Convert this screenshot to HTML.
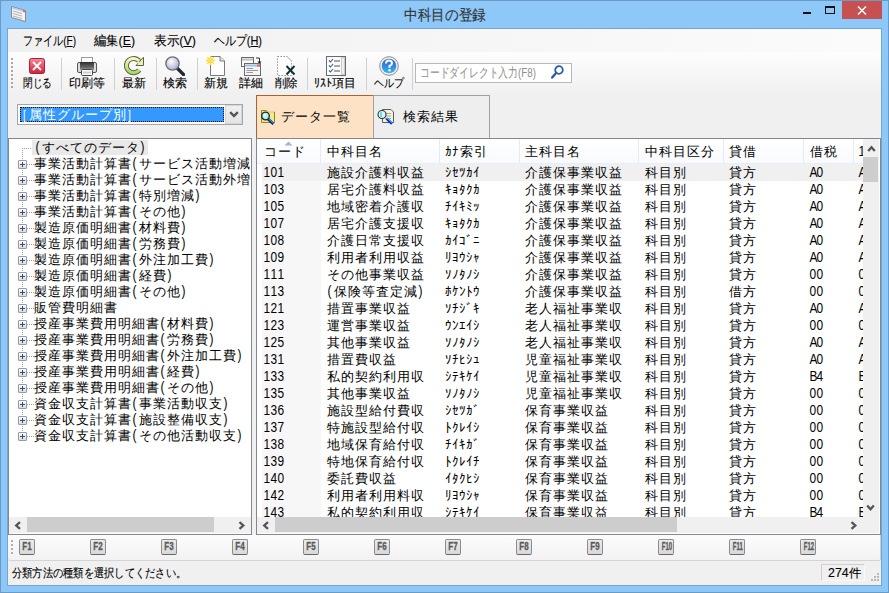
<!DOCTYPE html>
<html><head><meta charset="utf-8"><style>
*{box-sizing:border-box;margin:0;padding:0}
html,body{width:889px;height:593px;overflow:hidden}
body{font-family:"Liberation Sans",sans-serif;font-size:14px;color:#000;position:relative;background:#8ec8f8}
.a{position:absolute}
.nw{white-space:nowrap}
.ft{transform-origin:0 0}
i.h{display:inline-block;width:7px;text-align:center;font-style:normal;transform:scaleX(.85)}
i.k{display:inline-block;width:7px;text-align:center;font-style:normal;font-size:13px}
.cb i.h{font-size:12px}
i.z{display:inline-block;width:14px;text-align:center;font-style:normal;font-size:13px}
.sep{position:absolute;top:58px;width:1px;height:32px;background:#d0d0d0}
.tr{position:absolute;left:34px;height:16px;line-height:16px;white-space:nowrap}
.pb{position:absolute;left:18px;width:9px;height:9px;border:1px solid #9a9a9a;border-radius:1px;background:linear-gradient(#fcfcfc,#dcdcdc)}
.pb:before{content:"";position:absolute;left:1px;top:3px;width:5px;height:1px;background:#2a4a9c}
.pb:after{content:"";position:absolute;left:3px;top:1px;width:1px;height:5px;background:#2a4a9c}
.row{position:absolute;left:257px;width:606px;height:17px;line-height:17px;white-space:nowrap;overflow:hidden}
.row span{position:absolute;top:0}
.fk{position:absolute;top:539px;width:16px;height:16px;border:1px solid #8c8c8c;border-bottom-color:#666;border-radius:2px;background:linear-gradient(#ececec,#d8d8d8);overflow:hidden}
.fk b{position:absolute;left:0;top:0;width:14px;font-size:10px;font-weight:bold;color:#5a5a5a;-webkit-text-stroke:0.3px #5a5a5a;text-align:center;line-height:14px;transform:scaleX(.8);transform-origin:50% 0}
.fk b.w{transform:scaleX(.6)}
.ft{-webkit-text-stroke:0.12px #000}
</style></head><body>
<div class="a" style="left:0;top:0;width:889px;height:593px;border:1px solid #6b9ac4;background:#8ec8f8"></div>
<svg class="a" style="left:10px;top:5px" width="17" height="18" viewBox="0 0 17 18">
<path d="M1.5 1.5 L15.5 5.5 L15.5 16.5 L1.5 12.5 Z" fill="#f4f4f4" stroke="#8a8a8a" stroke-width="1"/>
<path d="M2 2 L15 5.8 L15 7.5 L2 3.8 Z" fill="#b8d0ea"/>
<path d="M13 5 L15 5.6 L15 7.3 L13 6.7 Z" fill="#e06060"/>
<path d="M3 6 L12 8.6 M3 8.5 L12 11.1 M3 11 L12 13.6" stroke="#a0a0a0" stroke-width="0.8"/>
</svg>
<div id="f1" class="a nw ft" style="left:404px;top:5px;font-size:15px;line-height:20px;transform:scaleX(0.9111);color:#3a3a3a;">中科目の登録</div>
<div class="a" style="left:803px;top:12px;width:8px;height:2px;background:#111"></div>
<div class="a" style="left:825px;top:6px;width:10px;height:8px;border:1px solid #111;border-top-width:2px"></div>
<div class="a" style="left:842px;top:1px;width:40px;height:18px;background:#c75050"></div>
<svg class="a" style="left:857px;top:6px" width="10" height="9" viewBox="0 0 10 9"><path d="M1 0.5 L9 8.5 M9 0.5 L1 8.5" stroke="#fff" stroke-width="1.5"/></svg>
<div class="a" style="left:7px;top:28px;width:875px;height:558px;border:1px solid #74a4d0;background:#f0f0f0"></div>
<div class="a" style="left:8px;top:29px;width:873px;height:23px;background:linear-gradient(90deg,#f0f0f0,#fbfbfb)"></div>
<div class="a" style="left:8px;top:52px;width:873px;height:43px;background:linear-gradient(#fdfdfd,#f0f0f0)"></div>
<div id="f2" class="a nw ft" style="left:23px;top:33px;font-size:13px;line-height:16px;transform:scaleX(0.7721);">ファイル(<u>F</u>)</div>
<div id="f3" class="a nw ft" style="left:94px;top:33px;font-size:13px;line-height:16px;transform:scaleX(0.9456);">編集(<u>E</u>)</div>
<div id="f4" class="a nw ft" style="left:154px;top:33px;font-size:13px;line-height:16px;transform:scaleX(0.9686);">表示(<u>V</u>)</div>
<div id="f5" class="a nw ft" style="left:214px;top:33px;font-size:13px;line-height:16px;transform:scaleX(0.8410);">ヘルプ(<u>H</u>)</div>
<div class="a" style="left:11px;top:58px;width:2px;height:30px;background:repeating-linear-gradient(#a8a8a8 0 2px,transparent 2px 4px)"></div>
<div id="f6" class="a nw ft" style="left:23px;top:76px;font-size:12px;line-height:14px;transform:scaleX(0.8056);">閉じる</div>
<div id="f7" class="a nw ft" style="left:69px;top:76px;font-size:12px;line-height:14px;transform:scaleX(1.0000);">印刷等</div>
<div id="f8" class="a nw ft" style="left:122px;top:76px;font-size:12px;line-height:14px;transform:scaleX(1.0000);">最新</div>
<div id="f9" class="a nw ft" style="left:163px;top:76px;font-size:12px;line-height:14px;transform:scaleX(1.0000);">検索</div>
<div id="f10" class="a nw ft" style="left:204px;top:76px;font-size:12px;line-height:14px;transform:scaleX(1.0000);">新規</div>
<div id="f11" class="a nw ft" style="left:239px;top:76px;font-size:12px;line-height:14px;transform:scaleX(1.0000);">詳細</div>
<div id="f12" class="a nw ft" style="left:275px;top:76px;font-size:12px;line-height:14px;transform:scaleX(0.9583);">削除</div>
<div id="f13" class="a nw ft" style="left:314px;top:76px;font-size:12px;line-height:14px;transform:scaleX(1.0000);">ﾘｽﾄ項目</div>
<div id="f14" class="a nw ft" style="left:374px;top:76px;font-size:12px;line-height:14px;transform:scaleX(0.8333);">ヘルプ</div>
<div class="sep" style="left:61px"></div>
<div class="sep" style="left:114px"></div>
<div class="sep" style="left:156px"></div>
<div class="sep" style="left:197px"></div>
<div class="sep" style="left:307px"></div>
<div class="sep" style="left:366px"></div>
<div class="sep" style="left:412px"></div>
<svg class="a" style="left:29px;top:58px" width="16" height="16" viewBox="0 0 16 16">
<defs><linearGradient id="rg" x1="0" y1="0" x2="0" y2="1"><stop offset="0" stop-color="#f68a98"/><stop offset="1" stop-color="#d21f3a"/></linearGradient></defs>
<rect x="0.5" y="0.5" width="15" height="15" rx="2" fill="url(#rg)" stroke="#a8203a"/>
<path d="M4 4 L12 12 M12 4 L4 12" stroke="#fff" stroke-width="1.8"/></svg>
<svg class="a" style="left:77px;top:56px" width="20" height="20" viewBox="0 0 20 20">
<defs><linearGradient id="pg" x1="0" y1="0" x2="0" y2="1"><stop offset="0" stop-color="#2e2e2e"/><stop offset="0.7" stop-color="#6a6a6a"/><stop offset="1" stop-color="#a8a8a8"/></linearGradient></defs>
<rect x="4.5" y="1.5" width="11" height="5" fill="#fcfcfc" stroke="#9a9a9a"/>
<rect x="0.5" y="6.5" width="19" height="10" rx="1.5" fill="#dcdcdc" stroke="#555"/>
<rect x="3" y="6" width="14" height="8" fill="url(#pg)"/>
<rect x="4.5" y="13.5" width="11" height="6" rx="1" fill="#fafafa" stroke="#444"/>
<rect x="6" y="15.5" width="8" height="2" fill="#cfcfcf"/></svg>
<svg class="a" style="left:124px;top:55px" width="21" height="21" viewBox="0 0 21 21">
<defs><linearGradient id="gg" x1="0" y1="0" x2="0" y2="1"><stop offset="0" stop-color="#f8f8c0"/><stop offset="1" stop-color="#a8d868"/></linearGradient></defs>
<path d="M15.27 15.03 A7.2 7.2 0 1 1 15.12 5.97" fill="none" stroke="#5c6448" stroke-width="5"/>
<path d="M15.27 15.03 A7.2 7.2 0 1 1 15.12 5.97" fill="none" stroke="url(#gg)" stroke-width="3"/>
<path d="M12 10.5 L19.5 2.2 L19.5 10.5 Z" fill="#f0f0b0" stroke="#5c6448" stroke-width="1" stroke-linejoin="miter"/>
<path d="M13.8 8.2 L15 7" stroke="#e8eca8" stroke-width="2.2"/></svg>
<svg class="a" style="left:165px;top:56px" width="20" height="20" viewBox="0 0 20 20">
<defs><radialGradient id="mg" cx="0.4" cy="0.35" r="0.7"><stop offset="0" stop-color="#ffffff"/><stop offset="1" stop-color="#a8a8d8"/></radialGradient></defs>
<path d="M11.5 11.5 L18.5 18.5" stroke="#202838" stroke-width="3.2" stroke-linecap="round"/>
<circle cx="7.5" cy="7.5" r="6.6" fill="url(#mg)" stroke="#707070" stroke-width="1.4"/></svg>
<svg class="a" style="left:205px;top:56px" width="21" height="20" viewBox="0 0 21 20">
<path d="M5.5 0.5 H15 L19.5 5 V19.5 H5.5 Z" fill="#fff" stroke="#7a7a7a"/>
<path d="M15 0.5 V5 H19.5" fill="#e8e8e8" stroke="#7a7a7a"/>
<path d="M5.5 0 V9 M1 4.5 H10 M2.3 1.3 L8.7 7.7 M8.7 1.3 L2.3 7.7" stroke="#ffd830" stroke-width="1.3"/>
<circle cx="5.5" cy="4.5" r="2.2" fill="#ffe050"/></svg>
<svg class="a" style="left:240px;top:56px" width="22" height="20" viewBox="0 0 22 20">
<rect x="1.5" y="1.5" width="12" height="9" fill="#fafafa" stroke="#6a6a6a"/>
<path d="M2 3.5 H13" stroke="#c0c0c0" stroke-width="2"/>
<path d="M16 2 H19.5 V6.5" fill="none" stroke="#333"/><path d="M17.5 5.5 L21.5 5.5 L19.5 8 Z" fill="#222"/>
<rect x="4.5" y="7.5" width="16" height="12" fill="#f4f4f4" stroke="#6a6a6a"/>
<path d="M5 9.5 H20" stroke="#9cc0e8" stroke-width="2"/><rect x="17" y="8.5" width="3" height="2" fill="#e06060"/>
<path d="M6.5 12.5 H13 M6.5 14.5 H18 M6.5 16.5 H13" stroke="#9a9a9a" stroke-width="1"/></svg>
<svg class="a" style="left:276px;top:56px" width="21" height="20" viewBox="0 0 21 20">
<path d="M1.5 0.5 H11 L15.5 5 V19.5 H1.5 Z" fill="#fff" stroke="#909090" stroke-dasharray="1.5 1.5"/>
<path d="M11 0.5 L15.5 5" fill="none" stroke="#909090" stroke-dasharray="1.5 1.5"/>
<path d="M10.5 10 L18.5 18.5 M18.5 10 L10.5 18.5" stroke="#10302e" stroke-width="1.9"/></svg>
<svg class="a" style="left:326px;top:56px" width="20" height="20" viewBox="0 0 20 20">
<rect x="0.5" y="0.5" width="19" height="19" fill="#fbfbfb" stroke="#6a6a6a"/>
<rect x="15.5" y="1.5" width="3" height="17" fill="#eee" stroke="#ccc"/>
<path d="M3 4.5 L4.5 6 L7 3 M3 9.5 L4.5 11 L7 8 M3 14.5 L4.5 16 L7 13" fill="none" stroke="#406080" stroke-width="1.1"/>
<path d="M8 5 H14 M8 10 H14 M8 15 H14" stroke="#555" stroke-width="1"/></svg>
<svg class="a" style="left:379px;top:56px" width="20" height="20" viewBox="0 0 20 20">
<defs><linearGradient id="hg" x1="0" y1="0" x2="0" y2="1"><stop offset="0" stop-color="#2a5cd0"/><stop offset="1" stop-color="#3ab8f0"/></linearGradient></defs>
<circle cx="10" cy="10" r="9.3" fill="#f4f4f4" stroke="#8a8a8a" stroke-width="1"/>
<circle cx="10" cy="10" r="7.3" fill="url(#hg)"/>
<path d="M7 7.5 Q7 4.5 10 4.5 Q13 4.5 13 7.2 Q13 9 10.5 10 V11.8" fill="none" stroke="#fff" stroke-width="2"/>
<circle cx="10.5" cy="14.3" r="1.2" fill="#fff"/></svg>
<div class="a" style="left:415px;top:63px;width:157px;height:20px;border:1px solid #b6b8bd;background:#fff"></div>
<div id="f15" class="a nw ft" style="left:420px;top:65px;font-size:13px;line-height:16px;transform:scaleX(0.7540);color:#8d8d8d;-webkit-text-stroke:0;">コードダイレクト入力(F8)</div>
<svg class="a" style="left:551px;top:65px" width="13" height="14" viewBox="0 0 13 14">
<circle cx="8" cy="5" r="3.8" fill="none" stroke="#2a5ca8" stroke-width="1.8"/>
<path d="M5.3 7.8 L1.2 12.5" stroke="#2a5ca8" stroke-width="2.4" stroke-linecap="round"/></svg>
<div class="a" style="left:17px;top:104px;width:226px;height:21px;border:1px solid #a6a6a6;background:#fff"></div>
<div class="a" style="left:20px;top:107px;width:204px;height:15px;background:#3399ff;outline:1px dotted #111;outline-offset:-1px"></div>
<div class="a nw cb" style="left:21px;top:106px;color:#fff;line-height:16px;font-size:14px"><i class="h">[</i><i class="z">属</i><i class="z">性</i><i class="z">グ</i><i class="z">ル</i><i class="z">ー</i><i class="z">プ</i><i class="z">別</i><i class="h">]</i></div>
<div class="a" style="left:225px;top:105px;width:17px;height:19px;background:linear-gradient(#f0f0f0,#e4e4e4);border:1px solid #d6d6d6"></div>
<svg class="a" style="left:229px;top:111px" width="10" height="8" viewBox="0 0 10 8"><path d="M1.2 1.2 L5 5 L8.8 1.2" fill="none" stroke="#555" stroke-width="2.4"/></svg>
<div class="a" style="left:8px;top:138px;width:244px;height:397px;border:1px solid #828790;background:#fff"></div>
<div class="a" style="left:22px;top:148px;width:1px;height:289px;background:repeating-linear-gradient(#a0a0a0 0 1px,transparent 1px 2px)"></div>
<div class="a" style="left:22px;top:148px;width:10px;height:1px;background:repeating-linear-gradient(90deg,#a0a0a0 0 1px,transparent 1px 2px)"></div>
<div class="a" style="left:32px;top:140px;width:116px;height:15px;background:#e9e9e9"></div>
<div class="a" style="left:9px;top:139px;width:242px;height:378px;overflow:hidden">
<div class="tr" style="left:25px;top:0px"><i class="h">(</i><i class="z">す</i><i class="z">べ</i><i class="z">て</i><i class="z">の</i><i class="z">デ</i><i class="z">ー</i><i class="z">タ</i><i class="h">)</i></div>
<div class="a" style="left:18px;top:25px;width:14px;height:1px;background:repeating-linear-gradient(90deg,#a0a0a0 0 1px,transparent 1px 2px)"></div>
<div class="pb" style="left:9px;top:21px"></div>
<div class="tr" style="left:24px;top:16px"><i class="z">事</i><i class="z">業</i><i class="z">活</i><i class="z">動</i><i class="z">計</i><i class="z">算</i><i class="z">書</i><i class="h">(</i><i class="z">サ</i><i class="z">ー</i><i class="z">ビ</i><i class="z">ス</i><i class="z">活</i><i class="z">動</i><i class="z">増</i><i class="z">減</i></div>
<div class="a" style="left:18px;top:41px;width:14px;height:1px;background:repeating-linear-gradient(90deg,#a0a0a0 0 1px,transparent 1px 2px)"></div>
<div class="pb" style="left:9px;top:37px"></div>
<div class="tr" style="left:24px;top:32px"><i class="z">事</i><i class="z">業</i><i class="z">活</i><i class="z">動</i><i class="z">計</i><i class="z">算</i><i class="z">書</i><i class="h">(</i><i class="z">サ</i><i class="z">ー</i><i class="z">ビ</i><i class="z">ス</i><i class="z">活</i><i class="z">動</i><i class="z">外</i><i class="z">増</i></div>
<div class="a" style="left:18px;top:57px;width:14px;height:1px;background:repeating-linear-gradient(90deg,#a0a0a0 0 1px,transparent 1px 2px)"></div>
<div class="pb" style="left:9px;top:53px"></div>
<div class="tr" style="left:24px;top:48px"><i class="z">事</i><i class="z">業</i><i class="z">活</i><i class="z">動</i><i class="z">計</i><i class="z">算</i><i class="z">書</i><i class="h">(</i><i class="z">特</i><i class="z">別</i><i class="z">増</i><i class="z">減</i><i class="h">)</i></div>
<div class="a" style="left:18px;top:73px;width:14px;height:1px;background:repeating-linear-gradient(90deg,#a0a0a0 0 1px,transparent 1px 2px)"></div>
<div class="pb" style="left:9px;top:69px"></div>
<div class="tr" style="left:24px;top:64px"><i class="z">事</i><i class="z">業</i><i class="z">活</i><i class="z">動</i><i class="z">計</i><i class="z">算</i><i class="z">書</i><i class="h">(</i><i class="z">そ</i><i class="z">の</i><i class="z">他</i><i class="h">)</i></div>
<div class="a" style="left:18px;top:89px;width:14px;height:1px;background:repeating-linear-gradient(90deg,#a0a0a0 0 1px,transparent 1px 2px)"></div>
<div class="pb" style="left:9px;top:85px"></div>
<div class="tr" style="left:24px;top:80px"><i class="z">製</i><i class="z">造</i><i class="z">原</i><i class="z">価</i><i class="z">明</i><i class="z">細</i><i class="z">書</i><i class="h">(</i><i class="z">材</i><i class="z">料</i><i class="z">費</i><i class="h">)</i></div>
<div class="a" style="left:18px;top:105px;width:14px;height:1px;background:repeating-linear-gradient(90deg,#a0a0a0 0 1px,transparent 1px 2px)"></div>
<div class="pb" style="left:9px;top:101px"></div>
<div class="tr" style="left:24px;top:96px"><i class="z">製</i><i class="z">造</i><i class="z">原</i><i class="z">価</i><i class="z">明</i><i class="z">細</i><i class="z">書</i><i class="h">(</i><i class="z">労</i><i class="z">務</i><i class="z">費</i><i class="h">)</i></div>
<div class="a" style="left:18px;top:121px;width:14px;height:1px;background:repeating-linear-gradient(90deg,#a0a0a0 0 1px,transparent 1px 2px)"></div>
<div class="pb" style="left:9px;top:117px"></div>
<div class="tr" style="left:24px;top:112px"><i class="z">製</i><i class="z">造</i><i class="z">原</i><i class="z">価</i><i class="z">明</i><i class="z">細</i><i class="z">書</i><i class="h">(</i><i class="z">外</i><i class="z">注</i><i class="z">加</i><i class="z">工</i><i class="z">費</i><i class="h">)</i></div>
<div class="a" style="left:18px;top:137px;width:14px;height:1px;background:repeating-linear-gradient(90deg,#a0a0a0 0 1px,transparent 1px 2px)"></div>
<div class="pb" style="left:9px;top:133px"></div>
<div class="tr" style="left:24px;top:128px"><i class="z">製</i><i class="z">造</i><i class="z">原</i><i class="z">価</i><i class="z">明</i><i class="z">細</i><i class="z">書</i><i class="h">(</i><i class="z">経</i><i class="z">費</i><i class="h">)</i></div>
<div class="a" style="left:18px;top:153px;width:14px;height:1px;background:repeating-linear-gradient(90deg,#a0a0a0 0 1px,transparent 1px 2px)"></div>
<div class="pb" style="left:9px;top:149px"></div>
<div class="tr" style="left:24px;top:144px"><i class="z">製</i><i class="z">造</i><i class="z">原</i><i class="z">価</i><i class="z">明</i><i class="z">細</i><i class="z">書</i><i class="h">(</i><i class="z">そ</i><i class="z">の</i><i class="z">他</i><i class="h">)</i></div>
<div class="a" style="left:18px;top:169px;width:14px;height:1px;background:repeating-linear-gradient(90deg,#a0a0a0 0 1px,transparent 1px 2px)"></div>
<div class="pb" style="left:9px;top:165px"></div>
<div class="tr" style="left:24px;top:160px"><i class="z">販</i><i class="z">管</i><i class="z">費</i><i class="z">明</i><i class="z">細</i><i class="z">書</i></div>
<div class="a" style="left:18px;top:185px;width:14px;height:1px;background:repeating-linear-gradient(90deg,#a0a0a0 0 1px,transparent 1px 2px)"></div>
<div class="pb" style="left:9px;top:181px"></div>
<div class="tr" style="left:24px;top:176px"><i class="z">授</i><i class="z">産</i><i class="z">事</i><i class="z">業</i><i class="z">費</i><i class="z">用</i><i class="z">明</i><i class="z">細</i><i class="z">書</i><i class="h">(</i><i class="z">材</i><i class="z">料</i><i class="z">費</i><i class="h">)</i></div>
<div class="a" style="left:18px;top:201px;width:14px;height:1px;background:repeating-linear-gradient(90deg,#a0a0a0 0 1px,transparent 1px 2px)"></div>
<div class="pb" style="left:9px;top:197px"></div>
<div class="tr" style="left:24px;top:192px"><i class="z">授</i><i class="z">産</i><i class="z">事</i><i class="z">業</i><i class="z">費</i><i class="z">用</i><i class="z">明</i><i class="z">細</i><i class="z">書</i><i class="h">(</i><i class="z">労</i><i class="z">務</i><i class="z">費</i><i class="h">)</i></div>
<div class="a" style="left:18px;top:217px;width:14px;height:1px;background:repeating-linear-gradient(90deg,#a0a0a0 0 1px,transparent 1px 2px)"></div>
<div class="pb" style="left:9px;top:213px"></div>
<div class="tr" style="left:24px;top:208px"><i class="z">授</i><i class="z">産</i><i class="z">事</i><i class="z">業</i><i class="z">費</i><i class="z">用</i><i class="z">明</i><i class="z">細</i><i class="z">書</i><i class="h">(</i><i class="z">外</i><i class="z">注</i><i class="z">加</i><i class="z">工</i><i class="z">費</i><i class="h">)</i></div>
<div class="a" style="left:18px;top:233px;width:14px;height:1px;background:repeating-linear-gradient(90deg,#a0a0a0 0 1px,transparent 1px 2px)"></div>
<div class="pb" style="left:9px;top:229px"></div>
<div class="tr" style="left:24px;top:224px"><i class="z">授</i><i class="z">産</i><i class="z">事</i><i class="z">業</i><i class="z">費</i><i class="z">用</i><i class="z">明</i><i class="z">細</i><i class="z">書</i><i class="h">(</i><i class="z">経</i><i class="z">費</i><i class="h">)</i></div>
<div class="a" style="left:18px;top:249px;width:14px;height:1px;background:repeating-linear-gradient(90deg,#a0a0a0 0 1px,transparent 1px 2px)"></div>
<div class="pb" style="left:9px;top:245px"></div>
<div class="tr" style="left:24px;top:240px"><i class="z">授</i><i class="z">産</i><i class="z">事</i><i class="z">業</i><i class="z">費</i><i class="z">用</i><i class="z">明</i><i class="z">細</i><i class="z">書</i><i class="h">(</i><i class="z">そ</i><i class="z">の</i><i class="z">他</i><i class="h">)</i></div>
<div class="a" style="left:18px;top:265px;width:14px;height:1px;background:repeating-linear-gradient(90deg,#a0a0a0 0 1px,transparent 1px 2px)"></div>
<div class="pb" style="left:9px;top:261px"></div>
<div class="tr" style="left:24px;top:256px"><i class="z">資</i><i class="z">金</i><i class="z">収</i><i class="z">支</i><i class="z">計</i><i class="z">算</i><i class="z">書</i><i class="h">(</i><i class="z">事</i><i class="z">業</i><i class="z">活</i><i class="z">動</i><i class="z">収</i><i class="z">支</i><i class="h">)</i></div>
<div class="a" style="left:18px;top:281px;width:14px;height:1px;background:repeating-linear-gradient(90deg,#a0a0a0 0 1px,transparent 1px 2px)"></div>
<div class="pb" style="left:9px;top:277px"></div>
<div class="tr" style="left:24px;top:272px"><i class="z">資</i><i class="z">金</i><i class="z">収</i><i class="z">支</i><i class="z">計</i><i class="z">算</i><i class="z">書</i><i class="h">(</i><i class="z">施</i><i class="z">設</i><i class="z">整</i><i class="z">備</i><i class="z">収</i><i class="z">支</i><i class="h">)</i></div>
<div class="a" style="left:18px;top:297px;width:14px;height:1px;background:repeating-linear-gradient(90deg,#a0a0a0 0 1px,transparent 1px 2px)"></div>
<div class="pb" style="left:9px;top:293px"></div>
<div class="tr" style="left:24px;top:288px"><i class="z">資</i><i class="z">金</i><i class="z">収</i><i class="z">支</i><i class="z">計</i><i class="z">算</i><i class="z">書</i><i class="h">(</i><i class="z">そ</i><i class="z">の</i><i class="z">他</i><i class="z">活</i><i class="z">動</i><i class="z">収</i><i class="z">支</i><i class="h">)</i></div>
</div>
<div class="a" style="left:9px;top:517px;width:242px;height:16px;background:#f0f0f0"></div>
<div class="a" style="left:27px;top:517px;width:187px;height:15px;background:#cdcdcd"></div>
<svg class="a" style="left:14px;top:521px" width="8" height="9" viewBox="0 0 8 9"><path d="M6 1.2 L2.2 4.5 L6 7.8" fill="none" stroke="#555" stroke-width="2.3"/></svg>
<svg class="a" style="left:238px;top:521px" width="8" height="9" viewBox="0 0 8 9"><path d="M1.5 1.2 L5.3 4.5 L1.5 7.8" fill="none" stroke="#555" stroke-width="2.3"/></svg>
<div class="a" style="left:256px;top:95px;width:117px;height:43px;background:#fde2c6;border:1px solid #a8642a;border-bottom:none;border-right:none"></div>
<div class="a" style="left:373px;top:95px;width:117px;height:43px;background:#eeeeee;border:1px solid #a0a0a0;border-bottom:none"></div>
<div class="a nw" style="left:280px;top:108px;line-height:16px"><i class="z">デ</i><i class="z">ー</i><i class="z">タ</i><i class="z">一</i><i class="z">覧</i></div>
<div class="a nw" style="left:402px;top:108px;line-height:16px"><i class="z">検</i><i class="z">索</i><i class="z">結</i><i class="z">果</i></div>
<svg class="a" style="left:260px;top:109px" width="17" height="17" viewBox="0 0 17 17">
<path d="M1.5 1.5 H6.5 L8 3 H14.5 V13.5 H1.5 Z" fill="#f8e888" stroke="#8a8a20"/>
<path d="M2 3 H14" stroke="#fff8c0"/>
<path d="M7.5 9.5 L13.5 15" stroke="#102060" stroke-width="3"/>
<path d="M8 9.3 L13.8 14.5" stroke="#2090f0" stroke-width="1.2"/>
<circle cx="5.5" cy="7" r="3.8" fill="#b0f0f8" stroke="#202020" stroke-width="1.3"/>
<circle cx="4.8" cy="6.3" r="1.3" fill="#e8ffff"/></svg>
<svg class="a" style="left:377px;top:108px" width="18" height="18" viewBox="0 0 18 18">
<path d="M5.5 1.5 H14 L16.5 4 V14.5 H5.5 Z" fill="#f6f2de" stroke="#5a5a5a"/>
<path d="M8 5.5 H14 M8 8 H14 M8 10.5 H14" stroke="#a8a8a0"/>
<path d="M9.5 10.5 L15 15.8" stroke="#1030d0" stroke-width="2.6"/>
<path d="M9.8 9.8 L15.5 15.2" stroke="#30e0f8" stroke-width="0.9"/>
<circle cx="5" cy="6.5" r="4" fill="#d8f8fc" stroke="#303030" stroke-width="1.1"/>
<path d="M4 4 V9" stroke="#40d8f0" stroke-width="1.6"/></svg>
<div class="a" style="left:256px;top:138px;width:625px;height:397px;border:1px solid #828790;background:#fff"></div>
<div class="a" style="left:257px;top:139px;width:606px;height:25px;background:linear-gradient(#ffffff,#f8fafd);border-bottom:1px solid #e6eef8"></div>
<div class="a" style="left:320px;top:139px;width:1px;height:24px;background:#e3ebf5"></div>
<div class="a" style="left:439px;top:139px;width:1px;height:24px;background:#e3ebf5"></div>
<div class="a" style="left:519px;top:139px;width:1px;height:24px;background:#e3ebf5"></div>
<div class="a" style="left:638px;top:139px;width:1px;height:24px;background:#e3ebf5"></div>
<div class="a" style="left:723px;top:139px;width:1px;height:24px;background:#e3ebf5"></div>
<div class="a" style="left:803px;top:139px;width:1px;height:24px;background:#e3ebf5"></div>
<div class="a" style="left:853px;top:139px;width:1px;height:24px;background:#e3ebf5"></div>
<div class="a" style="left:257px;top:139px;width:606px;height:24px;overflow:hidden">
<div class="a nw" style="left:6px;top:0;line-height:24px"><i class="z">コ</i><i class="z">ー</i><i class="z">ド</i></div>
<div class="a nw" style="left:69px;top:0;line-height:24px"><i class="z">中</i><i class="z">科</i><i class="z">目</i><i class="z">名</i></div>
<div class="a nw" style="left:188px;top:0;line-height:24px"><i class="k">ｶ</i><i class="k">ﾅ</i><i class="z">索</i><i class="z">引</i></div>
<div class="a nw" style="left:267px;top:0;line-height:24px"><i class="z">主</i><i class="z">科</i><i class="z">目</i><i class="z">名</i></div>
<div class="a nw" style="left:387px;top:0;line-height:24px"><i class="z">中</i><i class="z">科</i><i class="z">目</i><i class="z">区</i><i class="z">分</i></div>
<div class="a nw" style="left:471px;top:0;line-height:24px"><i class="z">貸</i><i class="z">借</i></div>
<div class="a nw" style="left:552px;top:0;line-height:24px"><i class="z">借</i><i class="z">税</i></div>
<div class="a nw" style="left:601px;top:0;line-height:24px"><i class="h">1</i></div>
</div>
<svg class="a" style="left:284px;top:141px" width="9" height="5" viewBox="0 0 9 5"><path d="M0.5 4.5 L4.5 0.5 L8.5 4.5 Z" fill="#9ab8d8"/></svg>
<div class="a" style="left:257px;top:164px;width:606px;height:353px;overflow:hidden">
<div class="a" style="left:5px;top:17px;width:59px;height:340px;background:#f7f7f7"></div>
<div class="a" style="left:5px;top:0;width:601px;height:17px;background:#f0f0f0"></div>
<div class="a nw" style="left:6px;top:0px;line-height:17px"><i class="h">1</i><i class="h">0</i><i class="h">1</i></div>
<div class="a nw" style="left:69px;top:0px;line-height:17px"><i class="z">施</i><i class="z">設</i><i class="z">介</i><i class="z">護</i><i class="z">料</i><i class="z">収</i><i class="z">益</i></div>
<div class="a nw" style="left:188px;top:0px;line-height:17px"><i class="k">ｼ</i><i class="k">ｾ</i><i class="k">ﾂ</i><i class="k">ｶ</i><i class="k">ｲ</i></div>
<div class="a nw" style="left:267px;top:0px;line-height:17px"><i class="z">介</i><i class="z">護</i><i class="z">保</i><i class="z">事</i><i class="z">業</i><i class="z">収</i><i class="z">益</i></div>
<div class="a nw" style="left:387px;top:0px;line-height:17px"><i class="z">科</i><i class="z">目</i><i class="z">別</i></div>
<div class="a nw" style="left:471px;top:0px;line-height:17px"><i class="z">貸</i><i class="z">方</i></div>
<div class="a nw" style="left:552px;top:0px;line-height:17px"><i class="h">A</i><i class="h">0</i></div>
<div class="a nw" style="left:601px;top:0px;line-height:17px"><i class="h">A</i></div>
<div class="a nw" style="left:6px;top:17px;line-height:17px"><i class="h">1</i><i class="h">0</i><i class="h">3</i></div>
<div class="a nw" style="left:69px;top:17px;line-height:17px"><i class="z">居</i><i class="z">宅</i><i class="z">介</i><i class="z">護</i><i class="z">料</i><i class="z">収</i><i class="z">益</i></div>
<div class="a nw" style="left:188px;top:17px;line-height:17px"><i class="k">ｷ</i><i class="k">ｮ</i><i class="k">ﾀ</i><i class="k">ｸ</i><i class="k">ｶ</i></div>
<div class="a nw" style="left:267px;top:17px;line-height:17px"><i class="z">介</i><i class="z">護</i><i class="z">保</i><i class="z">事</i><i class="z">業</i><i class="z">収</i><i class="z">益</i></div>
<div class="a nw" style="left:387px;top:17px;line-height:17px"><i class="z">科</i><i class="z">目</i><i class="z">別</i></div>
<div class="a nw" style="left:471px;top:17px;line-height:17px"><i class="z">貸</i><i class="z">方</i></div>
<div class="a nw" style="left:552px;top:17px;line-height:17px"><i class="h">A</i><i class="h">0</i></div>
<div class="a nw" style="left:601px;top:17px;line-height:17px"><i class="h">A</i></div>
<div class="a nw" style="left:6px;top:34px;line-height:17px"><i class="h">1</i><i class="h">0</i><i class="h">5</i></div>
<div class="a nw" style="left:69px;top:34px;line-height:17px"><i class="z">地</i><i class="z">域</i><i class="z">密</i><i class="z">着</i><i class="z">介</i><i class="z">護</i><i class="z">収</i></div>
<div class="a nw" style="left:188px;top:34px;line-height:17px"><i class="k">ﾁ</i><i class="k">ｲ</i><i class="k">ｷ</i><i class="k">ﾐ</i><i class="k">ｯ</i></div>
<div class="a nw" style="left:267px;top:34px;line-height:17px"><i class="z">介</i><i class="z">護</i><i class="z">保</i><i class="z">事</i><i class="z">業</i><i class="z">収</i><i class="z">益</i></div>
<div class="a nw" style="left:387px;top:34px;line-height:17px"><i class="z">科</i><i class="z">目</i><i class="z">別</i></div>
<div class="a nw" style="left:471px;top:34px;line-height:17px"><i class="z">貸</i><i class="z">方</i></div>
<div class="a nw" style="left:552px;top:34px;line-height:17px"><i class="h">A</i><i class="h">0</i></div>
<div class="a nw" style="left:601px;top:34px;line-height:17px"><i class="h">A</i></div>
<div class="a nw" style="left:6px;top:51px;line-height:17px"><i class="h">1</i><i class="h">0</i><i class="h">7</i></div>
<div class="a nw" style="left:69px;top:51px;line-height:17px"><i class="z">居</i><i class="z">宅</i><i class="z">介</i><i class="z">護</i><i class="z">支</i><i class="z">援</i><i class="z">収</i></div>
<div class="a nw" style="left:188px;top:51px;line-height:17px"><i class="k">ｷ</i><i class="k">ｮ</i><i class="k">ﾀ</i><i class="k">ｸ</i><i class="k">ｶ</i></div>
<div class="a nw" style="left:267px;top:51px;line-height:17px"><i class="z">介</i><i class="z">護</i><i class="z">保</i><i class="z">事</i><i class="z">業</i><i class="z">収</i><i class="z">益</i></div>
<div class="a nw" style="left:387px;top:51px;line-height:17px"><i class="z">科</i><i class="z">目</i><i class="z">別</i></div>
<div class="a nw" style="left:471px;top:51px;line-height:17px"><i class="z">貸</i><i class="z">方</i></div>
<div class="a nw" style="left:552px;top:51px;line-height:17px"><i class="h">A</i><i class="h">0</i></div>
<div class="a nw" style="left:601px;top:51px;line-height:17px"><i class="h">A</i></div>
<div class="a nw" style="left:6px;top:68px;line-height:17px"><i class="h">1</i><i class="h">0</i><i class="h">8</i></div>
<div class="a nw" style="left:69px;top:68px;line-height:17px"><i class="z">介</i><i class="z">護</i><i class="z">日</i><i class="z">常</i><i class="z">支</i><i class="z">援</i><i class="z">収</i></div>
<div class="a nw" style="left:188px;top:68px;line-height:17px"><i class="k">ｶ</i><i class="k">ｲ</i><i class="k">ｺ</i><i class="k">ﾞ</i><i class="k">ﾆ</i></div>
<div class="a nw" style="left:267px;top:68px;line-height:17px"><i class="z">介</i><i class="z">護</i><i class="z">保</i><i class="z">事</i><i class="z">業</i><i class="z">収</i><i class="z">益</i></div>
<div class="a nw" style="left:387px;top:68px;line-height:17px"><i class="z">科</i><i class="z">目</i><i class="z">別</i></div>
<div class="a nw" style="left:471px;top:68px;line-height:17px"><i class="z">貸</i><i class="z">方</i></div>
<div class="a nw" style="left:552px;top:68px;line-height:17px"><i class="h">A</i><i class="h">0</i></div>
<div class="a nw" style="left:601px;top:68px;line-height:17px"><i class="h">A</i></div>
<div class="a nw" style="left:6px;top:85px;line-height:17px"><i class="h">1</i><i class="h">0</i><i class="h">9</i></div>
<div class="a nw" style="left:69px;top:85px;line-height:17px"><i class="z">利</i><i class="z">用</i><i class="z">者</i><i class="z">利</i><i class="z">用</i><i class="z">収</i><i class="z">益</i></div>
<div class="a nw" style="left:188px;top:85px;line-height:17px"><i class="k">ﾘ</i><i class="k">ﾖ</i><i class="k">ｳ</i><i class="k">ｼ</i><i class="k">ｬ</i></div>
<div class="a nw" style="left:267px;top:85px;line-height:17px"><i class="z">介</i><i class="z">護</i><i class="z">保</i><i class="z">事</i><i class="z">業</i><i class="z">収</i><i class="z">益</i></div>
<div class="a nw" style="left:387px;top:85px;line-height:17px"><i class="z">科</i><i class="z">目</i><i class="z">別</i></div>
<div class="a nw" style="left:471px;top:85px;line-height:17px"><i class="z">貸</i><i class="z">方</i></div>
<div class="a nw" style="left:552px;top:85px;line-height:17px"><i class="h">A</i><i class="h">0</i></div>
<div class="a nw" style="left:601px;top:85px;line-height:17px"><i class="h">A</i></div>
<div class="a nw" style="left:6px;top:102px;line-height:17px"><i class="h">1</i><i class="h">1</i><i class="h">1</i></div>
<div class="a nw" style="left:69px;top:102px;line-height:17px"><i class="z">そ</i><i class="z">の</i><i class="z">他</i><i class="z">事</i><i class="z">業</i><i class="z">収</i><i class="z">益</i></div>
<div class="a nw" style="left:188px;top:102px;line-height:17px"><i class="k">ｿ</i><i class="k">ﾉ</i><i class="k">ﾀ</i><i class="k">ﾉ</i><i class="k">ｼ</i></div>
<div class="a nw" style="left:267px;top:102px;line-height:17px"><i class="z">介</i><i class="z">護</i><i class="z">保</i><i class="z">事</i><i class="z">業</i><i class="z">収</i><i class="z">益</i></div>
<div class="a nw" style="left:387px;top:102px;line-height:17px"><i class="z">科</i><i class="z">目</i><i class="z">別</i></div>
<div class="a nw" style="left:471px;top:102px;line-height:17px"><i class="z">貸</i><i class="z">方</i></div>
<div class="a nw" style="left:552px;top:102px;line-height:17px"><i class="h">0</i><i class="h">0</i></div>
<div class="a nw" style="left:601px;top:102px;line-height:17px"><i class="h">0</i></div>
<div class="a nw" style="left:6px;top:119px;line-height:17px"><i class="h">1</i><i class="h">1</i><i class="h">3</i></div>
<div class="a nw" style="left:69px;top:119px;line-height:17px"><i class="h">(</i><i class="z">保</i><i class="z">険</i><i class="z">等</i><i class="z">査</i><i class="z">定</i><i class="z">減</i><i class="h">)</i></div>
<div class="a nw" style="left:188px;top:119px;line-height:17px"><i class="k">ﾎ</i><i class="k">ｹ</i><i class="k">ﾝ</i><i class="k">ﾄ</i><i class="k">ｳ</i></div>
<div class="a nw" style="left:267px;top:119px;line-height:17px"><i class="z">介</i><i class="z">護</i><i class="z">保</i><i class="z">事</i><i class="z">業</i><i class="z">収</i><i class="z">益</i></div>
<div class="a nw" style="left:387px;top:119px;line-height:17px"><i class="z">科</i><i class="z">目</i><i class="z">別</i></div>
<div class="a nw" style="left:471px;top:119px;line-height:17px"><i class="z">借</i><i class="z">方</i></div>
<div class="a nw" style="left:552px;top:119px;line-height:17px"><i class="h">0</i><i class="h">0</i></div>
<div class="a nw" style="left:601px;top:119px;line-height:17px"><i class="h">0</i></div>
<div class="a nw" style="left:6px;top:136px;line-height:17px"><i class="h">1</i><i class="h">2</i><i class="h">1</i></div>
<div class="a nw" style="left:69px;top:136px;line-height:17px"><i class="z">措</i><i class="z">置</i><i class="z">事</i><i class="z">業</i><i class="z">収</i><i class="z">益</i></div>
<div class="a nw" style="left:188px;top:136px;line-height:17px"><i class="k">ｿ</i><i class="k">ﾁ</i><i class="k">ｼ</i><i class="k">ﾞ</i><i class="k">ｷ</i></div>
<div class="a nw" style="left:267px;top:136px;line-height:17px"><i class="z">老</i><i class="z">人</i><i class="z">福</i><i class="z">祉</i><i class="z">事</i><i class="z">業</i><i class="z">収</i></div>
<div class="a nw" style="left:387px;top:136px;line-height:17px"><i class="z">科</i><i class="z">目</i><i class="z">別</i></div>
<div class="a nw" style="left:471px;top:136px;line-height:17px"><i class="z">貸</i><i class="z">方</i></div>
<div class="a nw" style="left:552px;top:136px;line-height:17px"><i class="h">A</i><i class="h">0</i></div>
<div class="a nw" style="left:601px;top:136px;line-height:17px"><i class="h">A</i></div>
<div class="a nw" style="left:6px;top:153px;line-height:17px"><i class="h">1</i><i class="h">2</i><i class="h">3</i></div>
<div class="a nw" style="left:69px;top:153px;line-height:17px"><i class="z">運</i><i class="z">営</i><i class="z">事</i><i class="z">業</i><i class="z">収</i><i class="z">益</i></div>
<div class="a nw" style="left:188px;top:153px;line-height:17px"><i class="k">ｳ</i><i class="k">ﾝ</i><i class="k">ｴ</i><i class="k">ｲ</i><i class="k">ｼ</i></div>
<div class="a nw" style="left:267px;top:153px;line-height:17px"><i class="z">老</i><i class="z">人</i><i class="z">福</i><i class="z">祉</i><i class="z">事</i><i class="z">業</i><i class="z">収</i></div>
<div class="a nw" style="left:387px;top:153px;line-height:17px"><i class="z">科</i><i class="z">目</i><i class="z">別</i></div>
<div class="a nw" style="left:471px;top:153px;line-height:17px"><i class="z">貸</i><i class="z">方</i></div>
<div class="a nw" style="left:552px;top:153px;line-height:17px"><i class="h">0</i><i class="h">0</i></div>
<div class="a nw" style="left:601px;top:153px;line-height:17px"><i class="h">0</i></div>
<div class="a nw" style="left:6px;top:170px;line-height:17px"><i class="h">1</i><i class="h">2</i><i class="h">5</i></div>
<div class="a nw" style="left:69px;top:170px;line-height:17px"><i class="z">其</i><i class="z">他</i><i class="z">事</i><i class="z">業</i><i class="z">収</i><i class="z">益</i></div>
<div class="a nw" style="left:188px;top:170px;line-height:17px"><i class="k">ｿ</i><i class="k">ﾉ</i><i class="k">ﾀ</i><i class="k">ﾉ</i><i class="k">ｼ</i></div>
<div class="a nw" style="left:267px;top:170px;line-height:17px"><i class="z">老</i><i class="z">人</i><i class="z">福</i><i class="z">祉</i><i class="z">事</i><i class="z">業</i><i class="z">収</i></div>
<div class="a nw" style="left:387px;top:170px;line-height:17px"><i class="z">科</i><i class="z">目</i><i class="z">別</i></div>
<div class="a nw" style="left:471px;top:170px;line-height:17px"><i class="z">貸</i><i class="z">方</i></div>
<div class="a nw" style="left:552px;top:170px;line-height:17px"><i class="h">A</i><i class="h">0</i></div>
<div class="a nw" style="left:601px;top:170px;line-height:17px"><i class="h">A</i></div>
<div class="a nw" style="left:6px;top:187px;line-height:17px"><i class="h">1</i><i class="h">3</i><i class="h">1</i></div>
<div class="a nw" style="left:69px;top:187px;line-height:17px"><i class="z">措</i><i class="z">置</i><i class="z">費</i><i class="z">収</i><i class="z">益</i></div>
<div class="a nw" style="left:188px;top:187px;line-height:17px"><i class="k">ｿ</i><i class="k">ﾁ</i><i class="k">ﾋ</i><i class="k">ｼ</i><i class="k">ｭ</i></div>
<div class="a nw" style="left:267px;top:187px;line-height:17px"><i class="z">児</i><i class="z">童</i><i class="z">福</i><i class="z">祉</i><i class="z">事</i><i class="z">業</i><i class="z">収</i></div>
<div class="a nw" style="left:387px;top:187px;line-height:17px"><i class="z">科</i><i class="z">目</i><i class="z">別</i></div>
<div class="a nw" style="left:471px;top:187px;line-height:17px"><i class="z">貸</i><i class="z">方</i></div>
<div class="a nw" style="left:552px;top:187px;line-height:17px"><i class="h">A</i><i class="h">0</i></div>
<div class="a nw" style="left:601px;top:187px;line-height:17px"><i class="h">A</i></div>
<div class="a nw" style="left:6px;top:204px;line-height:17px"><i class="h">1</i><i class="h">3</i><i class="h">3</i></div>
<div class="a nw" style="left:69px;top:204px;line-height:17px"><i class="z">私</i><i class="z">的</i><i class="z">契</i><i class="z">約</i><i class="z">利</i><i class="z">用</i><i class="z">収</i></div>
<div class="a nw" style="left:188px;top:204px;line-height:17px"><i class="k">ｼ</i><i class="k">ﾃ</i><i class="k">ｷ</i><i class="k">ｹ</i><i class="k">ｲ</i></div>
<div class="a nw" style="left:267px;top:204px;line-height:17px"><i class="z">児</i><i class="z">童</i><i class="z">福</i><i class="z">祉</i><i class="z">事</i><i class="z">業</i><i class="z">収</i></div>
<div class="a nw" style="left:387px;top:204px;line-height:17px"><i class="z">科</i><i class="z">目</i><i class="z">別</i></div>
<div class="a nw" style="left:471px;top:204px;line-height:17px"><i class="z">貸</i><i class="z">方</i></div>
<div class="a nw" style="left:552px;top:204px;line-height:17px"><i class="h">B</i><i class="h">4</i></div>
<div class="a nw" style="left:601px;top:204px;line-height:17px"><i class="h">B</i></div>
<div class="a nw" style="left:6px;top:221px;line-height:17px"><i class="h">1</i><i class="h">3</i><i class="h">5</i></div>
<div class="a nw" style="left:69px;top:221px;line-height:17px"><i class="z">其</i><i class="z">他</i><i class="z">事</i><i class="z">業</i><i class="z">収</i><i class="z">益</i></div>
<div class="a nw" style="left:188px;top:221px;line-height:17px"><i class="k">ｿ</i><i class="k">ﾉ</i><i class="k">ﾀ</i><i class="k">ﾉ</i><i class="k">ｼ</i></div>
<div class="a nw" style="left:267px;top:221px;line-height:17px"><i class="z">児</i><i class="z">童</i><i class="z">福</i><i class="z">祉</i><i class="z">事</i><i class="z">業</i><i class="z">収</i></div>
<div class="a nw" style="left:387px;top:221px;line-height:17px"><i class="z">科</i><i class="z">目</i><i class="z">別</i></div>
<div class="a nw" style="left:471px;top:221px;line-height:17px"><i class="z">貸</i><i class="z">方</i></div>
<div class="a nw" style="left:552px;top:221px;line-height:17px"><i class="h">0</i><i class="h">0</i></div>
<div class="a nw" style="left:601px;top:221px;line-height:17px"><i class="h">0</i></div>
<div class="a nw" style="left:6px;top:238px;line-height:17px"><i class="h">1</i><i class="h">3</i><i class="h">6</i></div>
<div class="a nw" style="left:69px;top:238px;line-height:17px"><i class="z">施</i><i class="z">設</i><i class="z">型</i><i class="z">給</i><i class="z">付</i><i class="z">費</i><i class="z">収</i></div>
<div class="a nw" style="left:188px;top:238px;line-height:17px"><i class="k">ｼ</i><i class="k">ｾ</i><i class="k">ﾂ</i><i class="k">ｶ</i><i class="k">ﾞ</i></div>
<div class="a nw" style="left:267px;top:238px;line-height:17px"><i class="z">保</i><i class="z">育</i><i class="z">事</i><i class="z">業</i><i class="z">収</i><i class="z">益</i></div>
<div class="a nw" style="left:387px;top:238px;line-height:17px"><i class="z">科</i><i class="z">目</i><i class="z">別</i></div>
<div class="a nw" style="left:471px;top:238px;line-height:17px"><i class="z">貸</i><i class="z">方</i></div>
<div class="a nw" style="left:552px;top:238px;line-height:17px"><i class="h">0</i><i class="h">0</i></div>
<div class="a nw" style="left:601px;top:238px;line-height:17px"><i class="h">0</i></div>
<div class="a nw" style="left:6px;top:255px;line-height:17px"><i class="h">1</i><i class="h">3</i><i class="h">7</i></div>
<div class="a nw" style="left:69px;top:255px;line-height:17px"><i class="z">特</i><i class="z">施</i><i class="z">設</i><i class="z">型</i><i class="z">給</i><i class="z">付</i><i class="z">収</i></div>
<div class="a nw" style="left:188px;top:255px;line-height:17px"><i class="k">ﾄ</i><i class="k">ｸ</i><i class="k">ﾚ</i><i class="k">ｲ</i><i class="k">ｼ</i></div>
<div class="a nw" style="left:267px;top:255px;line-height:17px"><i class="z">保</i><i class="z">育</i><i class="z">事</i><i class="z">業</i><i class="z">収</i><i class="z">益</i></div>
<div class="a nw" style="left:387px;top:255px;line-height:17px"><i class="z">科</i><i class="z">目</i><i class="z">別</i></div>
<div class="a nw" style="left:471px;top:255px;line-height:17px"><i class="z">貸</i><i class="z">方</i></div>
<div class="a nw" style="left:552px;top:255px;line-height:17px"><i class="h">0</i><i class="h">0</i></div>
<div class="a nw" style="left:601px;top:255px;line-height:17px"><i class="h">0</i></div>
<div class="a nw" style="left:6px;top:272px;line-height:17px"><i class="h">1</i><i class="h">3</i><i class="h">8</i></div>
<div class="a nw" style="left:69px;top:272px;line-height:17px"><i class="z">地</i><i class="z">域</i><i class="z">保</i><i class="z">育</i><i class="z">給</i><i class="z">付</i><i class="z">収</i></div>
<div class="a nw" style="left:188px;top:272px;line-height:17px"><i class="k">ﾁ</i><i class="k">ｲ</i><i class="k">ｷ</i><i class="k">ｶ</i><i class="k">ﾞ</i></div>
<div class="a nw" style="left:267px;top:272px;line-height:17px"><i class="z">保</i><i class="z">育</i><i class="z">事</i><i class="z">業</i><i class="z">収</i><i class="z">益</i></div>
<div class="a nw" style="left:387px;top:272px;line-height:17px"><i class="z">科</i><i class="z">目</i><i class="z">別</i></div>
<div class="a nw" style="left:471px;top:272px;line-height:17px"><i class="z">貸</i><i class="z">方</i></div>
<div class="a nw" style="left:552px;top:272px;line-height:17px"><i class="h">0</i><i class="h">0</i></div>
<div class="a nw" style="left:601px;top:272px;line-height:17px"><i class="h">0</i></div>
<div class="a nw" style="left:6px;top:289px;line-height:17px"><i class="h">1</i><i class="h">3</i><i class="h">9</i></div>
<div class="a nw" style="left:69px;top:289px;line-height:17px"><i class="z">特</i><i class="z">地</i><i class="z">保</i><i class="z">育</i><i class="z">給</i><i class="z">付</i><i class="z">収</i></div>
<div class="a nw" style="left:188px;top:289px;line-height:17px"><i class="k">ﾄ</i><i class="k">ｸ</i><i class="k">ﾚ</i><i class="k">ｲ</i><i class="k">ﾁ</i></div>
<div class="a nw" style="left:267px;top:289px;line-height:17px"><i class="z">保</i><i class="z">育</i><i class="z">事</i><i class="z">業</i><i class="z">収</i><i class="z">益</i></div>
<div class="a nw" style="left:387px;top:289px;line-height:17px"><i class="z">科</i><i class="z">目</i><i class="z">別</i></div>
<div class="a nw" style="left:471px;top:289px;line-height:17px"><i class="z">貸</i><i class="z">方</i></div>
<div class="a nw" style="left:552px;top:289px;line-height:17px"><i class="h">0</i><i class="h">0</i></div>
<div class="a nw" style="left:601px;top:289px;line-height:17px"><i class="h">0</i></div>
<div class="a nw" style="left:6px;top:306px;line-height:17px"><i class="h">1</i><i class="h">4</i><i class="h">0</i></div>
<div class="a nw" style="left:69px;top:306px;line-height:17px"><i class="z">委</i><i class="z">託</i><i class="z">費</i><i class="z">収</i><i class="z">益</i></div>
<div class="a nw" style="left:188px;top:306px;line-height:17px"><i class="k">ｲ</i><i class="k">ﾀ</i><i class="k">ｸ</i><i class="k">ﾋ</i><i class="k">ｼ</i></div>
<div class="a nw" style="left:267px;top:306px;line-height:17px"><i class="z">保</i><i class="z">育</i><i class="z">事</i><i class="z">業</i><i class="z">収</i><i class="z">益</i></div>
<div class="a nw" style="left:387px;top:306px;line-height:17px"><i class="z">科</i><i class="z">目</i><i class="z">別</i></div>
<div class="a nw" style="left:471px;top:306px;line-height:17px"><i class="z">貸</i><i class="z">方</i></div>
<div class="a nw" style="left:552px;top:306px;line-height:17px"><i class="h">0</i><i class="h">0</i></div>
<div class="a nw" style="left:601px;top:306px;line-height:17px"><i class="h">0</i></div>
<div class="a nw" style="left:6px;top:323px;line-height:17px"><i class="h">1</i><i class="h">4</i><i class="h">2</i></div>
<div class="a nw" style="left:69px;top:323px;line-height:17px"><i class="z">利</i><i class="z">用</i><i class="z">者</i><i class="z">利</i><i class="z">用</i><i class="z">料</i><i class="z">収</i></div>
<div class="a nw" style="left:188px;top:323px;line-height:17px"><i class="k">ﾘ</i><i class="k">ﾖ</i><i class="k">ｳ</i><i class="k">ｼ</i><i class="k">ｬ</i></div>
<div class="a nw" style="left:267px;top:323px;line-height:17px"><i class="z">保</i><i class="z">育</i><i class="z">事</i><i class="z">業</i><i class="z">収</i><i class="z">益</i></div>
<div class="a nw" style="left:387px;top:323px;line-height:17px"><i class="z">科</i><i class="z">目</i><i class="z">別</i></div>
<div class="a nw" style="left:471px;top:323px;line-height:17px"><i class="z">貸</i><i class="z">方</i></div>
<div class="a nw" style="left:552px;top:323px;line-height:17px"><i class="h">0</i><i class="h">0</i></div>
<div class="a nw" style="left:601px;top:323px;line-height:17px"><i class="h">0</i></div>
<div class="a nw" style="left:6px;top:340px;line-height:17px"><i class="h">1</i><i class="h">4</i><i class="h">3</i></div>
<div class="a nw" style="left:69px;top:340px;line-height:17px"><i class="z">私</i><i class="z">的</i><i class="z">契</i><i class="z">約</i><i class="z">利</i><i class="z">用</i><i class="z">収</i></div>
<div class="a nw" style="left:188px;top:340px;line-height:17px"><i class="k">ｼ</i><i class="k">ﾃ</i><i class="k">ｷ</i><i class="k">ｹ</i><i class="k">ｲ</i></div>
<div class="a nw" style="left:267px;top:340px;line-height:17px"><i class="z">保</i><i class="z">育</i><i class="z">事</i><i class="z">業</i><i class="z">収</i><i class="z">益</i></div>
<div class="a nw" style="left:387px;top:340px;line-height:17px"><i class="z">科</i><i class="z">目</i><i class="z">別</i></div>
<div class="a nw" style="left:471px;top:340px;line-height:17px"><i class="z">貸</i><i class="z">方</i></div>
<div class="a nw" style="left:552px;top:340px;line-height:17px"><i class="h">B</i><i class="h">4</i></div>
<div class="a nw" style="left:601px;top:340px;line-height:17px"><i class="h">B</i></div>
</div>
<div class="a" style="left:863px;top:139px;width:16px;height:378px;background:#f0f0f0"></div>
<div class="a" style="left:863px;top:157px;width:15px;height:25px;background:#cdcdcd"></div>
<svg class="a" style="left:867px;top:145px" width="9" height="8" viewBox="0 0 9 8"><path d="M1.2 6 L4.5 2.2 L7.8 6" fill="none" stroke="#555" stroke-width="2.3"/></svg>
<svg class="a" style="left:866px;top:504px" width="9" height="8" viewBox="0 0 9 8"><path d="M1.2 1.5 L4.5 5.3 L7.8 1.5" fill="none" stroke="#555" stroke-width="2.3"/></svg>
<div class="a" style="left:257px;top:517px;width:606px;height:16px;background:#f0f0f0"></div>
<div class="a" style="left:275px;top:517px;width:402px;height:15px;background:#cdcdcd"></div>
<svg class="a" style="left:262px;top:521px" width="8" height="9" viewBox="0 0 8 9"><path d="M6 1.2 L2.2 4.5 L6 7.8" fill="none" stroke="#555" stroke-width="2.3"/></svg>
<svg class="a" style="left:850px;top:521px" width="8" height="9" viewBox="0 0 8 9"><path d="M1.5 1.2 L5.3 4.5 L1.5 7.8" fill="none" stroke="#555" stroke-width="2.3"/></svg>
<div class="a" style="left:863px;top:517px;width:16px;height:16px;background:#f0f0f0"></div>
<div class="a" style="left:8px;top:535px;width:873px;height:26px;background:linear-gradient(#fcfcfc,#f2f2f2);border-bottom:1px solid #d4d4d4;border-right:1px solid #cfcfcf;border-radius:0 0 2px 3px"></div>
<div class="a" style="left:11px;top:540px;width:2px;height:14px;background:repeating-linear-gradient(#b0b0b0 0 2px,transparent 2px 4px)"></div>
<div class="fk" style="left:19px"><b>F1</b></div>
<div class="fk" style="left:90px"><b>F2</b></div>
<div class="fk" style="left:161px"><b>F3</b></div>
<div class="fk" style="left:232px"><b>F4</b></div>
<div class="fk" style="left:303px"><b>F5</b></div>
<div class="fk" style="left:374px"><b>F6</b></div>
<div class="fk" style="left:445px"><b>F7</b></div>
<div class="fk" style="left:516px"><b>F8</b></div>
<div class="fk" style="left:587px"><b>F9</b></div>
<div class="fk" style="left:658px"><b class="w">F10</b></div>
<div class="fk" style="left:729px"><b class="w">F11</b></div>
<div class="fk" style="left:800px"><b class="w">F12</b></div>
<div id="f16" class="a nw ft" style="left:12px;top:565px;font-size:12px;line-height:17px;transform:scaleX(0.8529);">分類方法の種類を選択してください。</div>
<div class="a" style="left:821px;top:564px;width:44px;height:17px;border:1px solid #cfcfcf;border-right-color:#fafafa;border-bottom-color:#fafafa"></div>
<div id="f17" class="a nw ft" style="left:828px;top:565px;font-size:12px;line-height:17px;transform:scaleX(1.0302);">274件</div>
<svg class="a" style="left:869px;top:571px" width="11" height="12" viewBox="0 0 11 12"><g fill="#b8b8b8"><rect x="8" y="2" width="2" height="2"/><rect x="5" y="5" width="2" height="2"/><rect x="8" y="5" width="2" height="2"/><rect x="2" y="8" width="2" height="2"/><rect x="5" y="8" width="2" height="2"/><rect x="8" y="8" width="2" height="2"/></g></svg>
</body></html>
